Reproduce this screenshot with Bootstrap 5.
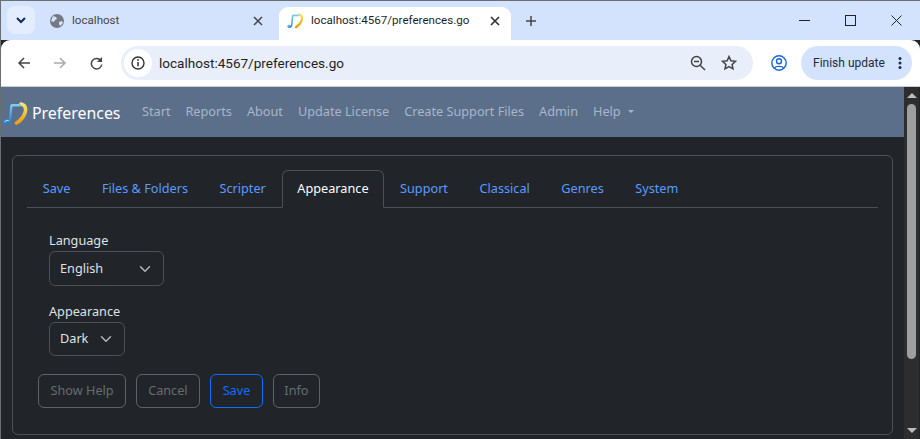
<!DOCTYPE html>
<html lang="en" data-bs-theme="dark">
<head>
    <meta charset="UTF-8">
    <meta name="viewport" content="width=device-width, initial-scale=1.0">
    <link href="https://cdn.jsdelivr.net/npm/bootstrap@5.3.0/dist/css/bootstrap.min.css" rel="stylesheet">
    <title>Preferences</title>
    <style>
        html, body { height: 100%; overflow: hidden; }
        body { font-family: "Noto Sans", sans-serif; font-size: 12.7px; background: #212529; }
        .win-shell { height: 439px; border: 1px solid #6b6e75; border-bottom: 0; border-right: 0; }

        .tab-strip { height: 39px; background: #d3e3fd; color: #1f1f1f; font-family: Roboto, sans-serif; font-size: 11.6px; }
        .tab-menu { width: 28px; height: 28px; margin: 5px 0 0 6px; border-radius: 8px; background: #e4edfd; }
        .tab-off { width: 244px; height: 39px; padding: 0 16px 0 15px; color: #444; }
        .tab-on { width: 232px; height: 33px; margin-top: 6px; padding: 0 11px 5px 8px; background: #fff; border-radius: 9px 9px 0 0; }
        .tab-plus { margin-left: 8px; height: 39px; width: 24px; }
        .win-btns { margin-left: auto; margin-right: 1px; }
        .win-btn { width: 46px; height: 39px; }

        .tool-bar { height: 46px; background: #fff; border-radius: 9px 9px 0 0; padding: 6px 8px 6px 0; color: #1f1f1f; font-family: Roboto, sans-serif; }
        .tool-btn { width: 36px; height: 34px; }
        .tool-first { margin-left: 5px; }
        .omni-box { width: 632px; height: 34px; margin-left: 7px; background: #e9effa; border-radius: 17px; padding: 0 16px 0 3px; font-size: 13.55px; }
        .omni-info { width: 28px; height: 28px; border-radius: 50%; background: #fff; margin-right: 7px; }
        .omni-zoom { margin-right: 15px; }
        .profile-btn { margin-left: 18px; }
        .update-pill { width: 111px; height: 34px; margin-left: 14px; background: #d3e3fd; border-radius: 17px; font-size: 12px; padding: 0 10px 0 12px; color: #1f2a3d; }
        .tool-rule { height: 1px; background: #c9cbd0; }

        .page-row { height: 352px; }
        .page-main { width: 903px; overflow: hidden; }
        .scroll-rail { width: 15px; background: #2e2d2d; padding: 0 3px; }
        .scroll-thumb { width: 9px; height: 255px; margin-top: 6px; background: #9f9f9f; border-radius: 5px; }
        .scroll-up { width: 0; height: 0; margin: 6px auto 0; border: 5px solid transparent; border-top: 0; border-bottom: 5px solid #bdbdbd; }
        .scroll-down { width: 0; height: 0; margin: auto auto 6px; border: 5px solid transparent; border-bottom: 0; border-top: 5px solid #bdbdbd; }

        .app-bar { height: 50px; background: #5b6f8b; padding: 0; }
        .app-brand { font-size: 15.9px; color: #fff; margin: 3px 14px 0 0; padding: 0; gap: 1px; }
        .app-bar.navbar-expand .navbar-nav .nav-link { color: #a9b6c8; font-size: 12.7px; padding: 0 7.5px; }
        .app-bar .dropdown-toggle::after { margin-left: 7px; }

        .pref-card { margin: 18px 11px 0 11px; height: 280px; background: transparent; border-color: #495057; }
        .pref-tabs { margin: 14px 14px 0 14px; font-size: 12.7px; }
        .pref-tabs .nav-link { padding: 0 14.75px; height: 38px; line-height: 34px; color: #5b9bff; }
        .pref-tabs .nav-link.active { color: #fff; background: #212529; }
        .pref-form { padding: 23px 0 0 36px; color: #dee2e6; }
        .pref-group { margin-bottom: 16px; }
        .pref-label { margin: 0 0 2px; font-size: 12.7px; line-height: 18px; display: block; }
        .pref-select { font-size: 12.7px; height: 34px; padding: 0 30px 0 10px; background-color: transparent; background-position: right 10px center; border-color: #495057; color: #dee2e6; }
        .pref-wide { width: 115px; height: 35px; }
        .pref-narrow { width: 76px; }
        .pref-actions { margin: 18px 0 0 25px; gap: 10px; }
        .pref-actions .btn { font-size: 12.7px; height: 34px; padding: 0 11.5px; }
        .pref-actions .btn.pref-btn-cancel { padding: 0 11px; }
        .pref-actions .btn.pref-btn-save { padding: 0 12px; }
        .pref-actions .btn.pref-btn-info { padding: 0 10px; }
        .pref-actions .btn:disabled { opacity: 1; color: #656c73; border-color: #5c636a; }
    </style>
</head>
<body>
    <div class="win-shell d-flex flex-column">
        <!-- browser tabs -->
        <div class="tab-strip d-flex">
            <div class="tab-menu d-flex align-items-center justify-content-center">
                <svg width="10" height="7" viewBox="0 0 10 7"><path d="M1 1l4 4 4-4" fill="none" stroke="#0b2a63" stroke-width="2"/></svg>
            </div>
            <div class="tab-off d-flex align-items-center">
                <svg width="14" height="14" viewBox="0 0 14 14" class="me-2"><circle cx="7" cy="7" r="7" fill="#757a80"/><path d="M3 2l3 1 1 2-2 1-1 2-3-1zM9 8l3-1 1 2-3 3-1-2z" fill="#d3e3fd"/></svg>
                <span class="flex-grow-1">localhost</span>
                <svg width="10" height="10" viewBox="0 0 10 10"><path d="M1 1l8 8M9 1l-8 8" stroke="#444" stroke-width="1.5"/></svg>
            </div>
            <div class="tab-on d-flex align-items-center">
                <svg width="16" height="17" viewBox="2 1 24 25" class="me-2">
                    <defs>
                        <linearGradient id="noteGold" x1="0" y1="0" x2="0" y2="1"><stop offset="0" stop-color="#fbe36a"/><stop offset="1" stop-color="#e8a010"/></linearGradient>
                        <linearGradient id="noteBlue" x1="0" y1="0" x2="0" y2="1"><stop offset="0" stop-color="#7fd0f5"/><stop offset="1" stop-color="#1c7fd8"/></linearGradient>
                        <symbol id="noteIcon" viewBox="0 0 30 26" overflow="visible">
                            <path d="M20 3C24.500 4 25.500 8 24 12C22.500 16 19 20 15.500 22" fill="none" stroke="url(#noteGold)" stroke-width="3.6" stroke-linecap="round"/>
                            <path d="M8 19L9.200 4.500Q9.500 3 11 3L20 3L19.500 5.500L11.500 5.500L10 19.500C9.500 22 7 23.500 4.500 23C2 22.500 2 20 4 18.800C5.500 18 7 18 8 19z" fill="url(#noteBlue)"/>
                            <path d="M3.500 21C4.500 19.800 6 19.300 7.500 19.500" fill="none" stroke="#d8f1ff" stroke-width="1"/>
                        </symbol>
                    </defs>
                    <use href="#noteIcon" width="30" height="26"/>
                </svg>
                <span class="flex-grow-1">localhost:4567/preferences.go</span>
                <svg width="10" height="10" viewBox="0 0 10 10"><path d="M1 1l8 8M9 1l-8 8" stroke="#333" stroke-width="1.7"/></svg>
            </div>
            <div class="tab-plus d-flex align-items-center justify-content-center">
                <svg width="12" height="12" viewBox="0 0 12 12"><path d="M6 1v10M1 6h10" stroke="#444" stroke-width="1.5"/></svg>
            </div>
            <div class="win-btns d-flex">
                <div class="win-btn d-flex align-items-center justify-content-center"><svg width="11" height="11" viewBox="0 0 11 11"><path d="M0 5.500h11" stroke="#222"/></svg></div>
                <div class="win-btn d-flex align-items-center justify-content-center"><svg width="11" height="11" viewBox="0 0 11 11"><rect x=".5" y=".5" width="10" height="10" fill="none" stroke="#222"/></svg></div>
                <div class="win-btn d-flex align-items-center justify-content-center"><svg width="11" height="11" viewBox="0 0 11 11"><path d="M.5.5l10 10M10.500.5l-10 10" stroke="#222"/></svg></div>
            </div>
        </div>
        <!-- address bar -->
        <div class="tool-bar d-flex align-items-center">
            <div class="tool-btn tool-first d-flex align-items-center justify-content-center"><svg width="14" height="12" viewBox="0 0 14 12"><path d="M13 6H2M7 1L2 6l5 5" fill="none" stroke="#444" stroke-width="1.5"/></svg></div>
            <div class="tool-btn d-flex align-items-center justify-content-center"><svg width="14" height="12" viewBox="0 0 14 12"><path d="M1 6h11M7 1l5 5-5 5" fill="none" stroke="#aaa" stroke-width="1.5"/></svg></div>
            <div class="tool-btn d-flex align-items-center justify-content-center"><svg width="13" height="13" viewBox="0 0 13 13"><path d="M11 4A5.200 5.200 0 1 0 11.700 7.500" fill="none" stroke="#444" stroke-width="1.5"/><path d="M12 0v5H7z" fill="#444"/></svg></div>
            <div class="omni-box d-flex align-items-center">
                <div class="omni-info d-flex align-items-center justify-content-center">
                    <svg width="14" height="14" viewBox="0 0 14 14"><circle cx="7" cy="7" r="6" fill="none" stroke="#333" stroke-width="1.4"/><path d="M7 6v4.200" stroke="#333" stroke-width="1.5"/><circle cx="7" cy="4" r=".9" fill="#333"/></svg>
                </div>
                <span class="flex-grow-1">localhost:4567/preferences.go</span>
                <svg width="16" height="16" viewBox="0 0 16 16" class="omni-zoom"><circle cx="6.500" cy="6.500" r="5" fill="none" stroke="#444" stroke-width="1.5"/><path d="M4 6.500h5M10.200 10.200L15 15" stroke="#444" stroke-width="1.5"/></svg>
                <svg width="16" height="16" viewBox="0 0 16 16"><path d="M8 1.600l1.900 4.200 4.600.5-3.400 3.100.9 4.500L8 11.600l-4 2.300.9-4.500L1.500 6.300l4.600-.5z" fill="none" stroke="#444" stroke-width="1.5"/></svg>
            </div>
            <div class="profile-btn d-flex align-items-center justify-content-center">
                <svg width="16" height="16" viewBox="0 0 16 16"><circle cx="8" cy="8" r="7.200" fill="none" stroke="#1a66d6" stroke-width="1.4"/><circle cx="8" cy="6.300" r="2.500" fill="none" stroke="#1a66d6" stroke-width="1.4"/><path d="M3.500 13c1-2.200 8-2.200 9 0" fill="none" stroke="#1a66d6" stroke-width="1.4"/></svg>
            </div>
            <div class="update-pill d-flex align-items-center">
                <span class="flex-grow-1">Finish update</span>
                <svg width="4" height="12" viewBox="0 0 4 12"><circle cx="2" cy="1.500" r="1.500" fill="#1f2a3d"/><circle cx="2" cy="6" r="1.500" fill="#1f2a3d"/><circle cx="2" cy="10.500" r="1.500" fill="#1f2a3d"/></svg>
            </div>
        </div>
        <div class="tool-rule"></div>

        <div class="page-row d-flex">
            <div class="page-main">
                <nav class="navbar navbar-expand app-bar">
                    <a class="navbar-brand app-brand d-flex align-items-center" href="#">
                        <svg width="30" height="26" viewBox="0 0 30 26"><use href="#noteIcon" width="30" height="26"/></svg>
                        Preferences
                    </a>
                    <ul class="navbar-nav">
                        <li class="nav-item"><a class="nav-link" href="#">Start</a></li>
                        <li class="nav-item"><a class="nav-link" href="#">Reports</a></li>
                        <li class="nav-item"><a class="nav-link" href="#">About</a></li>
                        <li class="nav-item"><a class="nav-link" href="#">Update License</a></li>
                        <li class="nav-item"><a class="nav-link" href="#">Create Support Files</a></li>
                        <li class="nav-item"><a class="nav-link" href="#">Admin</a></li>
                        <li class="nav-item"><a class="nav-link dropdown-toggle" href="#">Help</a></li>
                    </ul>
                </nav>
                <div class="card pref-card">
                    <ul class="nav nav-tabs pref-tabs">
                        <li class="nav-item"><a class="nav-link" href="#">Save</a></li>
                        <li class="nav-item"><a class="nav-link" href="#">Files &amp; Folders</a></li>
                        <li class="nav-item"><a class="nav-link" href="#">Scripter</a></li>
                        <li class="nav-item"><a class="nav-link active" href="#">Appearance</a></li>
                        <li class="nav-item"><a class="nav-link" href="#">Support</a></li>
                        <li class="nav-item"><a class="nav-link" href="#">Classical</a></li>
                        <li class="nav-item"><a class="nav-link" href="#">Genres</a></li>
                        <li class="nav-item"><a class="nav-link" href="#">System</a></li>
                    </ul>
                    <div class="pref-form">
                        <div class="pref-group">
                            <label class="pref-label" for="lang">Language</label>
                            <select class="form-select pref-select pref-wide" id="lang"><option>English</option></select>
                        </div>
                        <div>
                            <label class="pref-label" for="look">Appearance</label>
                            <select class="form-select pref-select pref-narrow" id="look"><option>Dark</option></select>
                        </div>
                    </div>
                    <div class="pref-actions d-flex">
                        <button type="button" class="btn btn-outline-secondary" disabled>Show Help</button>
                        <button type="button" class="btn btn-outline-secondary pref-btn-cancel" disabled>Cancel</button>
                        <button type="button" class="btn btn-outline-primary pref-btn-save">Save</button>
                        <button type="button" class="btn btn-outline-secondary pref-btn-info" disabled>Info</button>
                    </div>
                </div>
            </div>
            <div class="scroll-rail d-flex flex-column">
                <div class="scroll-up"></div>
                <div class="scroll-thumb"></div>
                <div class="scroll-down"></div>
            </div>
        </div>
    </div>
    <script src="https://cdn.jsdelivr.net/npm/bootstrap@5.3.0/dist/js/bootstrap.bundle.min.js"></script>
</body>
</html>
